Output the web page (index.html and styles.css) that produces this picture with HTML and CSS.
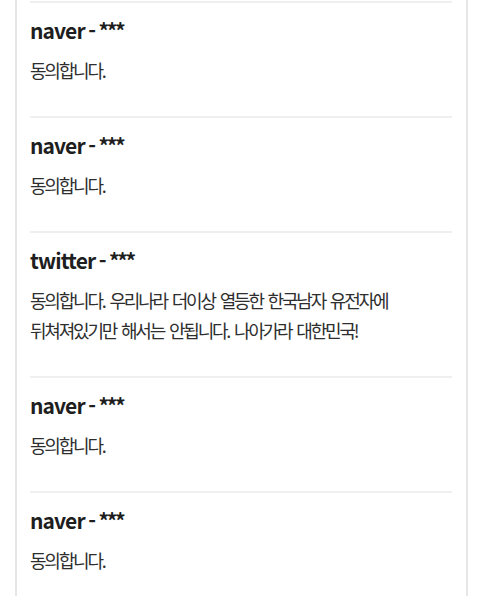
FILE: index.html
```html
<!DOCTYPE html>
<html lang="ko">
<head>
<meta charset="utf-8">
<link rel="stylesheet" href="styles.css">
</head>
<body>
<div class="card">
  <div class="item">
    <div class="author">naver - <span class="stars">***</span></div>
    <p class="msg">동의합니다.</p>
  </div>
  <div class="item">
    <div class="author">naver - <span class="stars">***</span></div>
    <p class="msg">동의합니다.</p>
  </div>
  <div class="item">
    <div class="author">twitter - <span class="stars">***</span></div>
    <p class="msg">동의합니다. 우리나라 더이상 열등한 한국남자 유전자에<br>뒤쳐져있기만 해서는 안됩니다. 나아가라 대한민국!</p>
  </div>
  <div class="item">
    <div class="author">naver - <span class="stars">***</span></div>
    <p class="msg">동의합니다.</p>
  </div>
  <div class="item">
    <div class="author">naver - <span class="stars">***</span></div>
    <p class="msg">동의합니다.</p>
  </div>
</div>
</body>
</html>
```
FILE: styles.css
```css
html, body {
  margin: 0;
  padding: 0;
  background: #ffffff;
}
body {
  font-family: "Noto Sans CJK KR", "Noto Sans", sans-serif;
  height: 596px;
  overflow: hidden;
}
.card {
  margin-left: 15px;
  width: 422px;
  min-height: 700px;
  border-left: 2px solid #e6e6e6;
  border-right: 2px solid #e6e6e6;
  padding: 1px 14px 0 13px;
}
.item {
  border-top: 2px solid #efefef;
  padding: 13px 0 31px 0;
}
.author {
  font-size: 21px;
  font-weight: 700;
  line-height: 28px;
  color: #1e1e1e;
  letter-spacing: -0.9px;
  word-spacing: -1.5px;
}
.stars {
  letter-spacing: -2.4px;
}
.msg {
  margin: 11px 0 0 0;
  font-size: 18px;
  line-height: 30px;
  color: #2e2e2e;
  letter-spacing: -2.2px;
  word-spacing: 2px;
}
```
